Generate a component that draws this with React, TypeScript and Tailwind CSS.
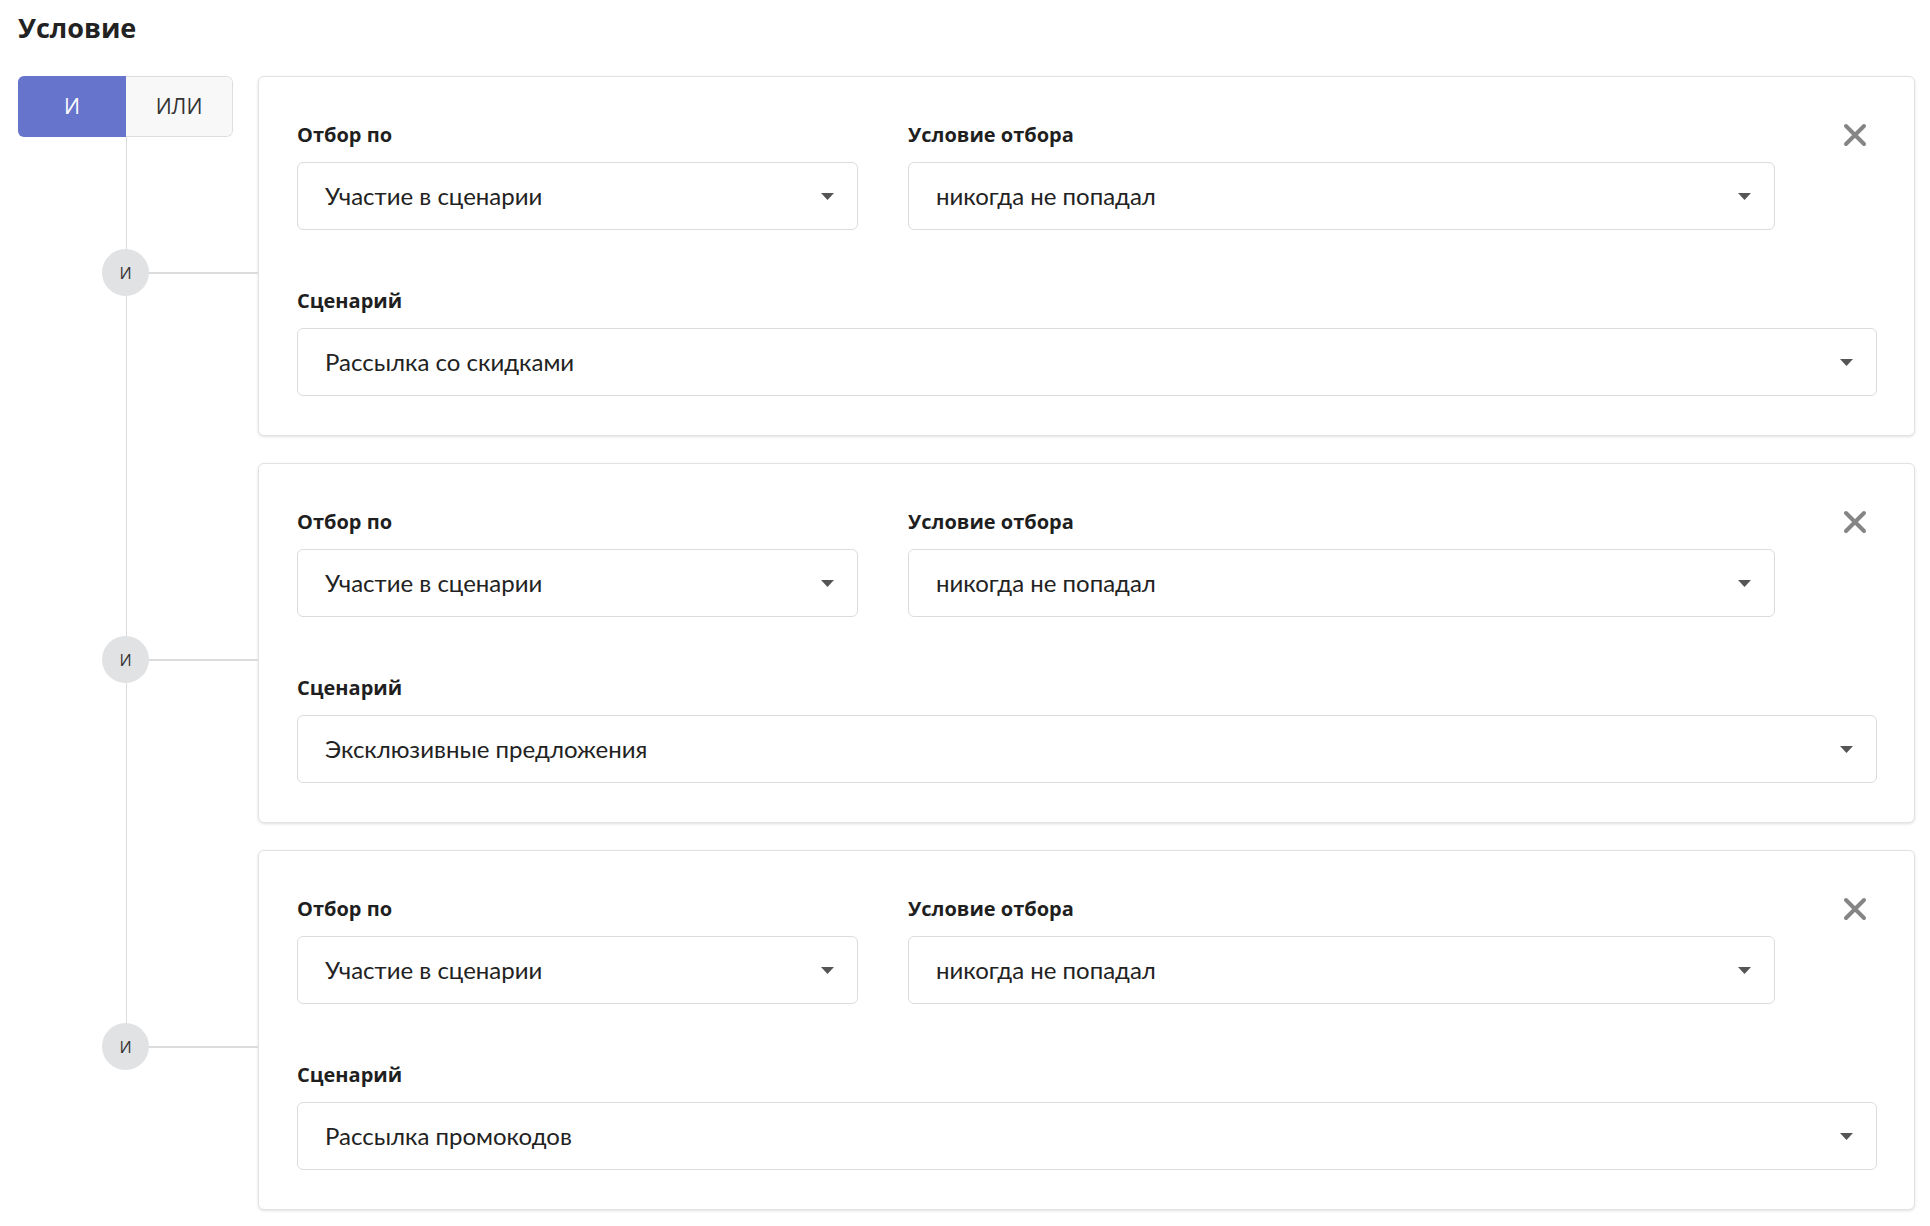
import { useState } from "react";

type Rule = {
  field: string;
  condition: string;
  scenario: string;
};

const rules: Rule[] = [
  { field: "Участие в сценарии", condition: "никогда не попадал", scenario: "Рассылка со скидками" },
  { field: "Участие в сценарии", condition: "никогда не попадал", scenario: "Эксклюзивные предложения" },
  { field: "Участие в сценарии", condition: "никогда не попадал", scenario: "Рассылка промокодов" },
];

function Caret() {
  return (
    <svg width="13" height="7" viewBox="0 0 13 7" className="shrink-0">
      <polygon points="0,0 13,0 6.5,7" fill="#555555" />
    </svg>
  );
}

function SelectBox({ value }: { value: string }) {
  return (
    <div className="flex h-[68px] w-full items-center justify-between rounded-md border border-[#dcdcdc] bg-white pl-[27px] pr-[23px]">
      <span className="font-['Lato',sans-serif] text-[24px] text-[#222]">{value}</span>
      <Caret />
    </div>
  );
}

function Label({ children }: { children: string }) {
  return <div className="mb-[13px] text-[20px] font-bold leading-7 text-[#1f1f1f]">{children}</div>;
}

function RuleCard({ rule }: { rule: Rule }) {
  return (
    <div className="rounded-md border border-[#e2e2e2] bg-white pl-[38px] pr-[37px] pt-[44px] pb-[39px] shadow-[0_1px_3px_rgba(0,0,0,0.12)]">
      <div className="flex items-start">
        <div className="w-[561px] shrink-0">
          <Label>Отбор по</Label>
          <SelectBox value={rule.field} />
        </div>
        <div className="ml-[50px] w-[867px] shrink-0">
          <Label>Условие отбора</Label>
          <SelectBox value={rule.condition} />
        </div>
        <div className="flex h-7 flex-1 items-center justify-end pr-[9px]">
          <button type="button" aria-label="Удалить">
            <svg width="26" height="26" viewBox="0 0 26 26">
              <path d="M4 4 L22 22 M22 4 L4 22" stroke="#858585" strokeWidth="4" strokeLinecap="round" />
            </svg>
          </button>
        </div>
      </div>
      <div className="mt-[57px]">
        <Label>Сценарий</Label>
        <SelectBox value={rule.scenario} />
      </div>
    </div>
  );
}

export default function App() {
  const [mode, setMode] = useState<"and" | "or">("and");

  return (
    <div className="min-h-screen bg-white pl-[18px] pr-[15px] pt-[10px] pb-4 font-['Open_Sans',sans-serif] text-[#222]">
      <h1 className="mb-[30px] text-[27px] font-bold leading-[36px] text-[#222]">Условие</h1>

      <div>
        {rules.map((rule, i) => {
          const first = i === 0;
          const last = i === rules.length - 1;
          return (
            <div key={i} className="flex">
              {/* дерево связей */}
              <div className="relative w-[240px] shrink-0">
                {first && (
                  <div className="relative z-10 flex h-[61px] w-[215px] overflow-hidden rounded-md text-[21px]">
                    <button
                      type="button"
                      onClick={() => setMode("and")}
                      className={
                        mode === "and"
                          ? "flex w-[108px] items-center justify-center bg-[#6674cc] text-white"
                          : "flex w-[108px] items-center justify-center border border-r-0 border-[#dedede] bg-[#f8f8f8] text-[#333]"
                      }
                    >
                      И
                    </button>
                    <button
                      type="button"
                      onClick={() => setMode("or")}
                      className={
                        mode === "or"
                          ? "flex flex-1 items-center justify-center bg-[#6674cc] text-white"
                          : "flex flex-1 items-center justify-center rounded-r-md border border-l-0 border-[#dedede] bg-[#f8f8f8] text-[#333]"
                      }
                    >
                      ИЛИ
                    </button>
                  </div>
                )}
                <div
                  className={
                    first
                      ? "absolute top-[61px] bottom-0 left-[108px] w-px bg-[#dcdcdc]"
                      : last
                        ? "absolute top-0 left-[108px] h-[198px] w-px bg-[#dcdcdc]"
                        : "absolute top-0 bottom-0 left-[108px] w-px bg-[#dcdcdc]"
                  }
                />
                <div className="absolute top-[196px] left-[108px] h-[2px] w-[132px] bg-[#dcdcdc]" />
                <div className="absolute top-[173px] left-[84px] flex h-[47px] w-[47px] items-center justify-center rounded-full bg-[#e1e2e4] text-[16px] text-[#333]">
                  И
                </div>
              </div>

              <div className={last ? "flex-1" : "flex-1 pb-[27px]"}>
                <RuleCard rule={rule} />
              </div>
            </div>
          );
        })}
      </div>
    </div>
  );
}
